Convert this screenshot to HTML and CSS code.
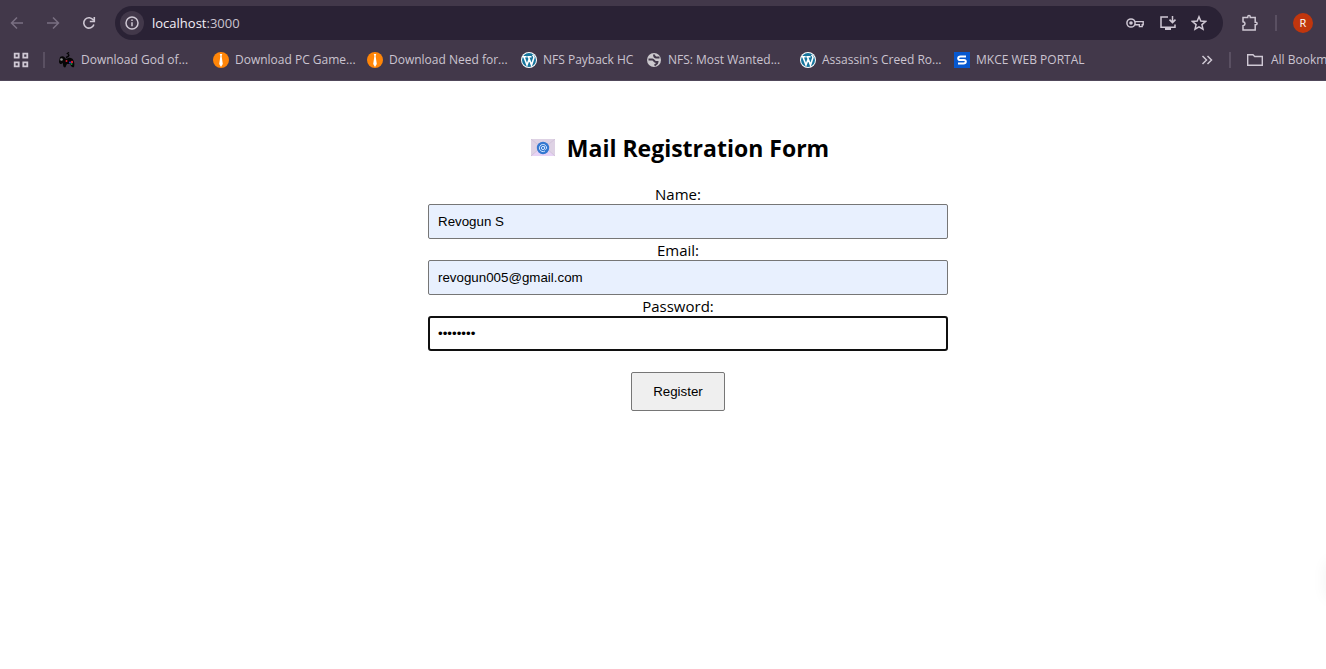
FILE: index.html
```html
<!DOCTYPE html>
<html lang="en">
<head>
<meta charset="utf-8">
<title>Mail Registration Form</title>
<link rel="stylesheet" href="styles.css">
</head>
<body>
<header class="browser">
  <div class="toolbar">
    <button class="icon-btn dim" aria-label="Back"><svg width="16" height="16" viewBox="0 0 16 16"><path d="M14 8H3M8 2.5 2.5 8 8 13.5"/></svg></button>
    <button class="icon-btn dim" aria-label="Forward"><svg width="16" height="16" viewBox="0 0 16 16"><path d="M2 8h11M8 2.5 13.5 8 8 13.5"/></svg></button>
    <button class="icon-btn" aria-label="Reload"><svg width="16" height="16" viewBox="0 0 16 16"><path d="M12.900 9.500A5.200 5.200 0 1 1 12.400 5.200M13.300 2v4.500H8.800" stroke-width="1.600"/></svg></button>
    <div class="omnibox">
      <button class="site-info" aria-label="Site information"><svg width="14" height="14" viewBox="0 0 14 14"><circle cx="7" cy="7" r="6"/><path d="M7 6.3v4M7 3.6v1.4"/></svg></button>
      <span class="url"><span class="host">localhost</span>:3000</span>
      <div class="omnibox-actions">
        <button class="icon-btn" aria-label="Passwords"><svg width="20" height="16" viewBox="0 0 20 16"><circle cx="6" cy="8" r="4.1"/><circle cx="6" cy="8" r="1.8" class="solid"/><path d="M10 6.6h8.2v3.2h-1v1.8h-2.8V9.8H10" stroke-width="1.4"/></svg></button>
        <button class="icon-btn" aria-label="Install app"><svg width="18" height="16" viewBox="0 0 18 16"><path d="M9 2H2v10.2h14V9.5M13.5 1v6M10.5 4.6l3 3 3-3"/><path d="M6 12.5h6V15H6z" class="solid"/></svg></button>
        <button class="icon-btn" aria-label="Bookmark this page"><svg width="16" height="16" viewBox="0 0 16 16"><path d="m8 1.8 1.8 4.3 4.7.4-3.6 3.1 1.1 4.6L8 11.8l-4 2.4 1.1-4.6-3.6-3.1 4.7-.4z"/></svg></button>
      </div>
    </div>
    <button class="icon-btn extensions" aria-label="Extensions"><svg width="18" height="18" viewBox="0 0 18 18"><path d="M2 3.500h4.700v-.6a1.300 1.300 0 0 1 2.600 0v.6h4.900v4.700h.6a1.300 1.300 0 0 1 0 2.600h-.6V16H2v-4.300c2.700-.4 2.700-3.500 0-3.900z"/></svg></button>
    <span class="divider"></span>
    <button class="avatar" aria-label="Profile">R</button>
  </div>
  <nav class="bookmarks" aria-label="Bookmarks">
    <button class="icon-btn apps" aria-label="Apps"><svg width="16" height="16" viewBox="0 0 16 16"><path d="M1.700 1.700h4v4h-4zM10.300 1.700h4v4h-4zM1.700 10.300h4v4h-4zM10.300 10.300h4v4h-4z" stroke-width="1.800"/></svg></button>
    <span class="divider"></span>
    <div class="links">
      <a class="bookmark wide" href="#"><svg width="16" height="16" viewBox="0 0 16 16"><path d="M7 5.500C11 4 10 2.500 8.500 1.500L10 .5" style="stroke:#050505"/><path class="black" d="M1 5c3-2 5 0 6 2 2-1 4-2 6-.5 2 1 3 6 2 8.500-2 1-3-1-4-3H8c-1 1-1 3-2 3.500-2 0-2-3-2-4.500C2 13 0 12 0 9.500z"/><circle class="gray" cx="2.500" cy="7.500" r="1.300"/><circle class="red" cx="7.500" cy="9" r="1"/><circle class="red" cx="13" cy="10" r="1.200"/><circle class="blue" cx="11" cy="10.500" r="1"/><circle class="green" cx="12.500" cy="12" r="1"/></svg><span>Download God of...</span></a>
      <a class="bookmark wide" href="#"><svg width="16" height="16" viewBox="0 0 16 16"><circle class="orange" cx="8" cy="8" r="8"/><path class="white" d="M6.700 2h2.600l-.7 2.100L9.800 12 8 15l-1.800-3 1.200-7.900z"/></svg><span>Download PC Game...</span></a>
      <a class="bookmark wide" href="#"><svg width="16" height="16" viewBox="0 0 16 16"><circle class="orange" cx="8" cy="8" r="8"/><path class="white" d="M6.700 2h2.600l-.7 2.100L9.800 12 8 15l-1.800-3 1.200-7.900z"/></svg><span>Download Need for...</span></a>
      <a class="bookmark" href="#"><svg width="16" height="16" viewBox="0 0 16 16"><circle class="white" cx="8" cy="8" r="8"/><circle class="wp" cx="8" cy="8" r="7"/><path class="wp-mark" d="M1.500 4.800h4.200M6.300 4.800h4.200M3 5l3 8 2.200-6M7.500 5l3 8 2.500-7.500c-.2-1.500-1-2-1.500-2.500"/></svg><span>NFS Payback HC</span></a>
      <a class="bookmark wide" href="#"><svg width="16" height="16" viewBox="0 0 16 16"><circle class="globe" cx="8" cy="8" r="7"/><path class="land" d="M2.500 7.500h4c1.500 0 1.500 2.500 3.500 2.500h1.500c0 2-1.500 2.500-3 3.500M8 2.500c0 1.500 0 2.500 2 3h3.500"/></svg><span>NFS: Most Wanted...</span></a>
      <a class="bookmark wide" href="#"><svg width="16" height="16" viewBox="0 0 16 16"><circle class="white" cx="8" cy="8" r="8"/><circle class="wp" cx="8" cy="8" r="7"/><path class="wp-mark" d="M1.500 4.800h4.200M6.300 4.800h4.200M3 5l3 8 2.200-6M7.500 5l3 8 2.500-7.500c-.2-1.500-1-2-1.500-2.500"/></svg><span>Assassin's Creed Ro...</span></a>
      <a class="bookmark wide" href="#"><svg width="16" height="16" viewBox="0 0 16 16"><path class="portal" d="M0 0h16v16H0z"/><path class="portal-mark" d="M12 4.500H6.500C3.500 4.500 3.500 8 6 8h4c2.500 0 2.500 3.500-.5 3.500H4"/></svg><span>MKCE WEB PORTAL</span></a>
    </div>
    <button class="icon-btn more" aria-label="More bookmarks"><svg width="12" height="12" viewBox="0 0 12 12"><path d="m1.500 2 4 4-4 4M6.500 2l4 4-4 4"/></svg></button>
    <span class="divider"></span>
    <button class="all-bookmarks"><svg width="18" height="16" viewBox="0 0 18 16"><path d="M1.700 13.300V2.700H7l1.700 1.800h7.600v8.800z" stroke-width="1.400"/></svg><span>All Bookmarks</span></button>
  </nav>
</header>
<main class="page">
  <h1 class="title"><svg width="24" height="18" viewBox="0 0 24 18" aria-hidden="true"><path class="env" d="M0 0h24v17H0z"/><path class="env-low" d="M0 17 9 9h6l9 8z"/><path class="env-fold" d="m0 0 12 10L24 0M0 17l9-8M24 17l-9-8"/><circle class="seal" cx="12" cy="9" r="6.200"/><circle class="at" cx="12" cy="9" r="1.600"/><path class="at" d="M13.600 7.400v2c0 1.500 2 1.200 2-.4a3.600 3.600 0 1 0-1.600 3"/></svg><span>Mail Registration Form</span></h1>
  <form class="form">
    <label for="name">Name:</label>
    <input class="field filled" id="name" type="text" value="Revogun S">
    <label for="email">Email:</label>
    <input class="field filled" id="email" type="email" value="revogun005@gmail.com">
    <label for="password">Password:</label>
    <input class="field focused" id="password" type="password" value="password">
    <button class="register" type="button">Register</button>
  </form>
</main>
<div class="edge-glow" aria-hidden="true"></div>
</body>
</html>
```

FILE: styles.css
```css
* { box-sizing: border-box; }

body {
  margin: 0;
  overflow-x: hidden;
  background: #fff;
  color: #000;
  font-family: "Open Sans", "Noto Sans", sans-serif;
}

button {
  font-family: inherit;
  font-size: inherit;
  line-height: inherit;
  color: inherit;
  border: 0;
  background: none;
  padding: 0;
}

.browser {
  background: #42384a;
  border-bottom: 1px solid #50485a;
  color: #cbc4d0;
  overflow: hidden;
}

.browser svg {
  display: block;
  flex: none;
  fill: none;
  stroke: #cfc8d4;
  stroke-width: 1.5;
}

.browser .solid { fill: #cfc8d4; stroke: none; }

.toolbar {
  display: flex;
  align-items: center;
  height: 34px;
  margin-top: 6px;
  padding: 0 13px 0 9px;
}

.icon-btn {
  display: flex;
  align-items: center;
  justify-content: center;
  flex: none;
}

.toolbar > .icon-btn { width: 16px; margin-right: 20px; }
.browser .dim svg { stroke: #796f82; }

.omnibox {
  display: flex;
  align-items: center;
  flex: 1;
  height: 34px;
  margin-right: 18px;
  margin-left: -2px;
  padding: 0 16px 0 5px;
  border-radius: 17px;
  background: #2a2235;
}

.site-info {
  display: grid;
  place-items: center;
  width: 24px;
  height: 24px;
  border-radius: 50%;
  background: #42384a;
}

.url { margin-left: 8px; font-size: 13px; line-height: 20px; }
.host { color: #f4eff7; }
.omnibox-actions { display: flex; gap: 14px; margin-left: auto; }

.toolbar > .extensions { width: 18px; margin-right: 16px; }

.divider {
  flex: none;
  width: 2px;
  height: 16px;
  background: #5a5062;
}

.avatar {
  width: 20px;
  height: 20px;
  margin-left: 16px;
  border-radius: 50%;
  background: #c1360d;
  color: #fff;
  font-size: 11px;
  line-height: 20px;
}

.bookmarks {
  display: flex;
  align-items: center;
  height: 40px;
  padding-left: 13px;
  font-size: 12px;
  line-height: 16px;
}

.apps { margin-right: 14px; }

.links {
  display: flex;
  flex: 1;
  gap: 17px;
  min-width: 0;
  margin-left: 14px;
}

.bookmark {
  display: flex;
  gap: 6px;
  width: 108px;
  color: inherit;
  text-decoration: none;
  white-space: nowrap;
}

.wide { width: 137px; }

.bookmark .black { fill: #050505; stroke: none; }
.bookmark .gray { fill: #8c8c8c; stroke: none; }
.bookmark .red { fill: #d31b2c; stroke: none; }
.bookmark .blue { fill: #3131d8; stroke: none; }
.bookmark .green { fill: #138a3a; stroke: none; }
.bookmark .orange { fill: #ff8508; stroke: none; }
.bookmark .white { fill: #fff; stroke: none; }
.bookmark .wp { fill: #15749c; stroke: none; }
.bookmark .wp-mark { stroke: #fff; stroke-width: 1.6; }
.bookmark .globe { fill: #cbc8cd; stroke: none; }
.bookmark .land { stroke: #42384a; stroke-width: 2; }
.bookmark .portal { fill: #0758cf; stroke: none; }
.bookmark .portal-mark { stroke: #fff; stroke-width: 2; }

.more { margin-right: 16px; }

.all-bookmarks {
  display: flex;
  gap: 7px;
  width: 80px;
  margin-left: 15px;
  overflow: hidden;
  white-space: nowrap;
}

.page {
  padding: 51px 0 0 30px;
}

.title {
  display: flex;
  align-items: center;
  justify-content: center;
  gap: 12px;
  margin: 0 0 19px;
  padding-left: 4px;
  font-size: 23px;
  line-height: 32px;
}

.title svg { fill: none; }
.title .env { fill: #ded2e4; }
.title .env-low { fill: #e7d3f5; }
.title .env-fold { stroke: #d2c3da; }
.title .seal { fill: #3478d0; }
.title .at { stroke: #d2e5ff; }

.form {
  display: flex;
  flex-direction: column;
  align-items: center;
  width: 500px;
  margin: 0 auto;
  font-size: 15px;
  line-height: 19px;
}

.form label { padding-top: 2px; }

.field {
  align-self: flex-start;
  width: 520px;
  height: 35px;
  padding: 0 9px;
  border: 1px solid #767676;
  border-radius: 2px;
  outline: 0;
  background: #fff;
  color: #000;
  font-family: "Liberation Sans", Arial, sans-serif;
}

.filled { background: #e8f0fe; }
.focused { padding: 0 8px; border: 2px solid #101010; border-radius: 3px; }

.register {
  margin-top: 21px;
  padding: 11px 21px;
  border: 1px solid #767676;
  border-radius: 2px;
  background: #efefef;
  font-family: "Liberation Sans", Arial, sans-serif;
  font-size: small;
  font-size: revert;
  line-height: 15px;
}

.edge-glow {
  position: fixed;
  right: -20px;
  bottom: 69px;
  width: 20px;
  height: 40px;
  border-radius: 20px;
  box-shadow: 0 0 16px rgba(0, 0, 0, 0.06);
}
```
